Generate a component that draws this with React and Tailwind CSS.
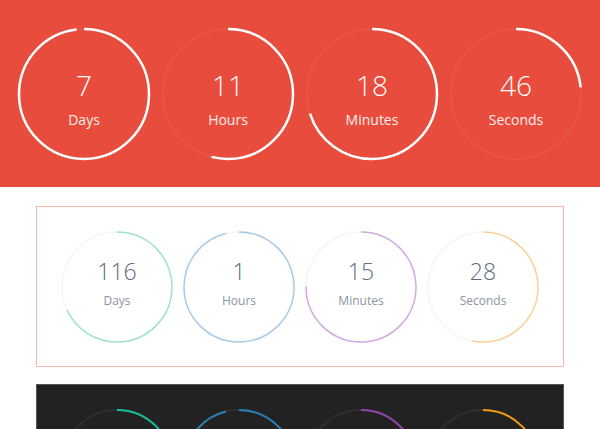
const big = [
  { v: 7, label: "Days", p: 0.98 },
  { v: 11, label: "Hours", p: 0.54 },
  { v: 18, label: "Minutes", p: 0.7 },
  { v: 46, label: "Seconds", p: 0.233 },
];

const small = [
  { v: 116, label: "Days", p: 0.68, light: "#9fe3cf", dark: "#1abc9c" },
  { v: 1, label: "Hours", p: 0.96, light: "#a9cbe8", dark: "#2980b9" },
  { v: 15, label: "Minutes", p: 0.75, light: "#d3acdf", dark: "#8e44ad" },
  { v: 28, label: "Seconds", p: 0.53, light: "#f8d29a", dark: "#f39c12" },
];

function Ring({ size, r, width, track, color, p, className, children }) {
  const c = 2 * Math.PI * r;
  return (
    <div className={`relative flex flex-col items-center justify-center ${className}`} style={{ width: size, height: size }}>
      <svg width={size} height={size} className="absolute inset-0 -rotate-90">
        <circle cx={size / 2} cy={size / 2} r={r} fill="none" stroke={track} strokeWidth={width} />
        <circle cx={size / 2} cy={size / 2} r={r} fill="none" stroke={color} strokeWidth={width}
          strokeDasharray={`${c * p} ${c}`} />
      </svg>
      {children}
    </div>
  );
}

export default function App() {
  return (
    <div className="w-[600px] h-[429px] overflow-hidden bg-white" style={{ fontFamily: '"Open Sans", sans-serif' }}>
      {/* red */}
      <div className="h-[187px] bg-[#e74c3c] flex items-center justify-center gap-[10px]">
        {big.map((b) => (
          <Ring key={b.label} size={134} r={65} width={2.5} track="rgba(255,255,255,0.05)" color="#fff" p={b.p} className="pt-[10px]">
            <div className="relative text-white text-[28px] font-light leading-none mb-[14px]">{b.v}</div>
            <div className="relative text-white/90 text-[14px] leading-none">{b.label}</div>
          </Ring>
        ))}
      </div>

      {/* light */}
      <div className="mx-auto mt-[19px] w-[528px] h-[161px] border border-[#f7b5ad] flex items-center justify-center gap-[10px]">
        {small.map((s) => (
          <Ring key={s.label} size={112} r={55} width={1.5} track="#f6f6f6" color={s.light} p={s.p} className="pb-[6px]">
            <div className="relative text-[#5e6b7b] text-[23px] font-light leading-none mb-[12px]">{s.v}</div>
            <div className="relative text-[#8b95a1] text-[12px] leading-none">{s.label}</div>
          </Ring>
        ))}
      </div>

      {/* dark */}
      <div className="mx-auto mt-[17px] w-[528px] h-[161px] bg-[#222] border border-[#555] flex items-center justify-center gap-[10px]">
        {small.map((s) => (
          <Ring key={s.label} size={112} r={55} width={2} track="#2e2e2e" color={s.dark} p={s.p} className="pb-[6px]">
            <div className="relative text-white text-[23px] font-light leading-none mb-[12px]">{s.v}</div>
            <div className="relative text-gray-400 text-[12px] leading-none">{s.label}</div>
          </Ring>
        ))}
      </div>
    </div>
  );
}
